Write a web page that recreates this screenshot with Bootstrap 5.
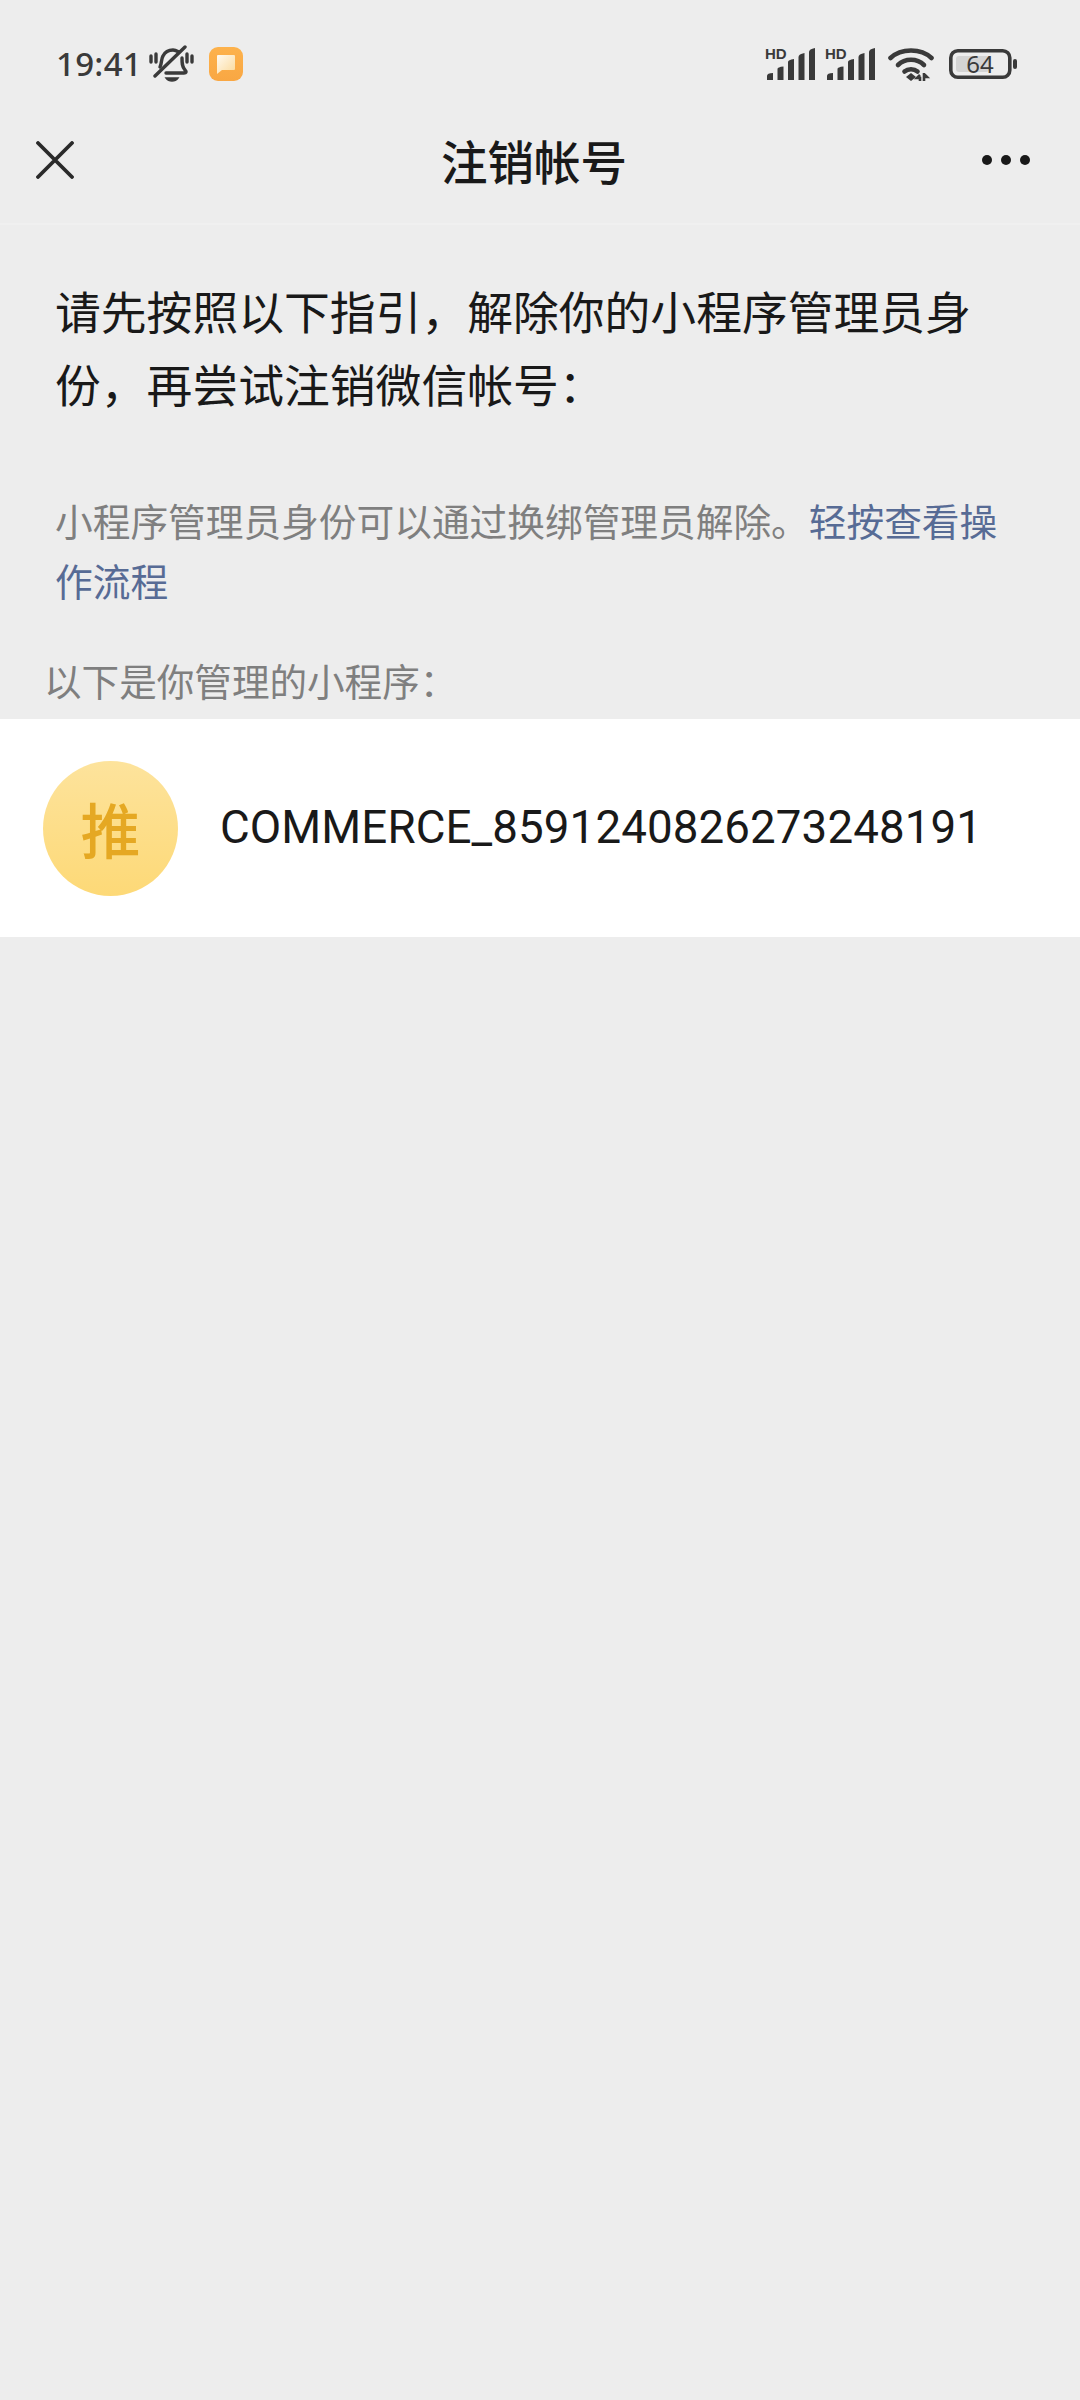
<!DOCTYPE html>
<html lang="zh-CN">

<head>
    <meta charset="UTF-8">
    <title>注销帐号</title>
    <link href="https://cdn.jsdelivr.net/npm/bootstrap@5.3.0/dist/css/bootstrap.min.css" rel="stylesheet">
    <style>
        body {
            background: #ededed;
            min-height: 2400px;
            font-family: Roboto, "Noto Sans CJK SC", sans-serif;
            color: #191919;
        }

        .status-strip {
            height: 97px;
            padding: 30px 63px 0 56px;
            color: #3a3a3a;
        }

        .clock {
            font-family: "Noto Sans", sans-serif;
            font-size: 33px;
            font-weight: 500;
            line-height: 1;
            letter-spacing: .3px;
        }

        .bell-icon { margin-left: 7px; }
        .note-icon { margin-left: 15px; }
        .signal-two { margin-left: 10px; }
        .wifi-icon { margin-left: 13px; }
        .battery-icon { margin-left: 15px; }

        .top-bar {
            height: 128px;
            padding: 0 48px 0 36px;
            border-bottom: 2px solid #f0f0f0;
        }

        .top-title {
            margin-left: 12px;
            font-family: "Noto Sans CJK SC", sans-serif;
            font-size: 46.5px;
            font-weight: 500;
            line-height: 1;
        }

        .intro-text {
            margin: 0;
            padding: 49px 44px 0 55px;
            font-family: "Noto Sans CJK SC", sans-serif;
            font-size: 45.8px;
            line-height: 73px;
        }

        .hint-text {
            margin: 0;
            padding: 70px 60px 0 55px;
            font-family: "Noto Sans CJK SC", sans-serif;
            font-size: 37.7px;
            line-height: 60px;
            color: #7f7f7f;
        }

        .hint-text a {
            color: #576b95;
            text-decoration: none;
        }

        .list-label {
            margin: 0;
            padding: 45px 0 0 44px;
            height: 109px;
            font-family: "Noto Sans CJK SC", sans-serif;
            font-size: 37.6px;
            line-height: 50px;
            color: #7f7f7f;
        }

        .app-row {
            height: 218px;
            padding-left: 43px;
            gap: 42px;
            background: #fff;
        }

        .app-avatar {
            width: 135px;
            height: 135px;
            background: linear-gradient(180deg, #fde39c, #fdd977);
            color: #e5a823;
            font-family: "Noto Sans CJK SC", sans-serif;
            font-size: 60px;
            font-weight: 500;
        }

        .app-name {
            font-size: 45.7px;
            letter-spacing: .1px;
        }
    </style>
</head>

<body>
    <div class="status-strip d-flex justify-content-between align-items-center">
        <div class="d-flex align-items-center">
            <span class="clock">19:41</span>
            <!-- muted bell -->
            <svg class="bell-icon" width="45" height="38" viewBox="0 0 45 38" fill="none" stroke="#3a3a3a" stroke-width="3.4" stroke-linecap="round">
                <path d="M11 22 C13 18 12 14 14 11 C16 7 20 5 24 5 C26 5 28 6 30 7" />
                <path d="M33 13 C33 18 33 22 36 25 C38 27 37 28 35 28 L17 28" />
                <path d="M36 2 L6 31" />
                <path d="M2 11 V17 M7 9 V17 M38 9 V17 M43 11 V17" />
                <path d="M17 33 C20 37 26 37 29 33 Z" fill="#3a3a3a" stroke-width="1.5" />
            </svg>
            <svg class="note-icon" width="34" height="34" viewBox="0 0 34 34">
                <defs>
                    <linearGradient id="noteBg" x1="0" y1="0" x2="0" y2="1">
                        <stop offset="0" stop-color="#fdb24c" />
                        <stop offset="1" stop-color="#f9a743" />
                    </linearGradient>
                    <linearGradient id="noteFg" x1="0" y1="0" x2="1" y2="1">
                        <stop offset="0" stop-color="#fffaf0" />
                        <stop offset="1" stop-color="#fbd99a" />
                    </linearGradient>
                </defs>
                <rect width="34" height="34" rx="9" fill="url(#noteBg)" />
                <path d="M8 9 Q8 8 9 8 H25 Q26 8 26 9 V22 Q26 23 25 23 H13 L8 27 Z" fill="url(#noteFg)" />
            </svg>
        </div>
        <div class="d-flex align-items-center">
            <svg width="50" height="40" viewBox="0 -4 50 40">
                <text x="0" y="11" font-family="Liberation Sans, sans-serif" font-size="15" font-weight="700" fill="#3a3a3a">HD</text>
                <path d="M2 32 V28 Q2 25 8 25 V32 Z M12.5 32 V21 Q12.5 19 18.500 18.500 V32 Z M23 32 V14 Q23 12 29 11 V32 Z M33.500 32 V9 Q33.500 6 39.500 5 V32 Z M44 32 V4 Q44 1 50 0 V32 Z" fill="#3a3a3a" />
            </svg>
            <svg class="signal-two" width="50" height="40" viewBox="0 -4 50 40">
                <text x="0" y="11" font-family="Liberation Sans, sans-serif" font-size="15" font-weight="700" fill="#3a3a3a">HD</text>
                <path d="M2 32 V28 Q2 25 8 25 V32 Z M12.5 32 V21 Q12.5 19 18.500 18.500 V32 Z M23 32 V14 Q23 12 29 11 V32 Z M33.500 32 V9 Q33.500 6 39.500 5 V32 Z M44 32 V4 Q44 1 50 0 V32 Z" fill="#3a3a3a" />
            </svg>
            <svg class="wifi-icon" width="46" height="34" viewBox="0 0 46 34" fill="none" stroke="#3a3a3a" stroke-width="4.6" stroke-linecap="round">
                <path d="M2.500 11 C13 1 33 1 43.500 11" />
                <path d="M10 18 C17 11 29 11 36 18" />
                <path d="M16.500 24.500 C20 21.500 26 21.500 29.500 24.500" />
                <path d="M23 26 L18 30 L23 34 L28 30 Z" fill="#3a3a3a" stroke="none" />
                <path d="M32 28 L29 31 H32 V34 M36 34 V26 M36 27 L39 30 H36" stroke-width="2.6" stroke-linecap="butt" />
            </svg>
            <svg class="battery-icon" width="68" height="40" viewBox="0 -5 68 40">
                <rect x="1.800" y="1.800" width="59" height="26.400" rx="7" fill="none" stroke="#3a3a3a" stroke-width="3.600" />
                <rect x="7" y="7" width="33" height="16" rx="3" fill="#d4d4d4" />
                <rect x="64" y="10" width="4" height="10" rx="2" fill="#3a3a3a" />
                <text x="31" y="23.500" text-anchor="middle" font-family="Noto Sans, sans-serif" font-size="24" fill="#3a3a3a">64</text>
            </svg>
        </div>
    </div>

    <div class="top-bar d-flex justify-content-between align-items-center">
        <svg width="38" height="38" viewBox="0 0 38 38" stroke="#2a2a2a" stroke-width="3.800" stroke-linecap="round">
            <path d="M2 2 L36 36 M36 2 L2 36" />
        </svg>
        <span class="top-title">注销帐号</span>
        <svg width="50" height="12" viewBox="0 0 50 12" fill="#191919">
            <circle cx="5" cy="6" r="5" />
            <circle cx="24" cy="6" r="5" />
            <circle cx="43" cy="6" r="5" />
        </svg>
    </div>

    <p class="intro-text">请先按照以下指引，解除你的小程序管理员身份，再尝试注销微信帐号：</p>
    <p class="hint-text">小程序管理员身份可以通过换绑管理员解除。<a href="#">轻按查看操作流程</a></p>
    <p class="list-label">以下是你管理的小程序：</p>

    <div class="app-row d-flex align-items-center">
        <div class="app-avatar rounded-circle d-flex align-items-center justify-content-center">推</div>
        <span class="app-name">COMMERCE_8591240826273248191</span>
    </div>

    <script src="https://cdn.jsdelivr.net/npm/bootstrap@5.3.0/dist/js/bootstrap.bundle.min.js"></script>
</body>

</html>
